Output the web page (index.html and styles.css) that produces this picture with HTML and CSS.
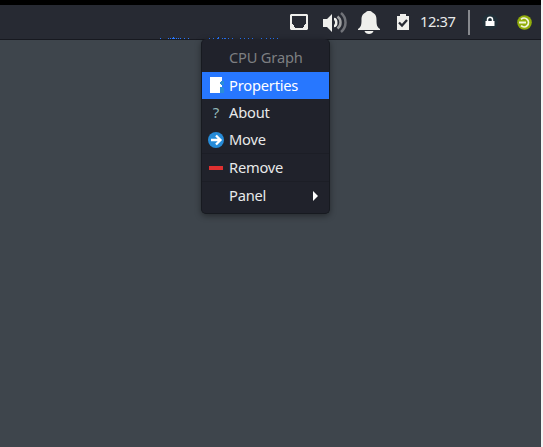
FILE: index.html
```html
<!DOCTYPE html>
<html lang="en">
<head>
<meta charset="utf-8">
<title>Desktop</title>
<link rel="stylesheet" href="styles.css">
</head>
<body>
<div class="desktop">
  <header class="panel">
    <svg class="cpu-graph" width="120" height="2" viewBox="0 0 120 2" shape-rendering="crispEdges" fill="#2777ff">
      <path d="M0 1h1v1H0zM8 1h1v1H8zM10 1h1v1h-1zM12 1h3v1h-3zM13 0h1v1h-1zM16 1h1v1h-1zM18 1h1v1h-1zM20 1h1v1h-1zM24 1h1v1h-1zM28 1h1v1h-1zM49 1h1v1h-1zM53 1h1v1h-1zM57 1h2v1h-2zM58 0h1v1h-1zM62 1h1v1h-1zM64 1h2v1h-2zM68 1h1v1h-1zM72 1h1v1h-1zM80 1h1v1h-1zM84 1h1v1h-1zM88 1h1v1h-1zM92 1h1v1h-1zM101 1h1v1h-1zM106 1h1v1h-1zM110 1h1v1h-1zM113 1h1v1h-1zM117 1h1v1h-1z"/>
    </svg>
    <svg class="network" width="18" height="16" viewBox="0 0 18 16" fill="#efefec">
      <path fill-rule="evenodd" d="M1 0h16l1 1v14l-1 1H1l-1-1V1zM2 2v8h1v1h1v2h1v1h8v-1h1v-2h1v-1h1V2z"/>
    </svg>
    <svg class="volume" width="25" height="21" viewBox="0 0 25 21" fill="none" stroke-width="2.5">
      <path fill="#efefec" d="M0 7h4l5-5v18l-5-5H0z"/>
      <path stroke="#efefec" d="M11 7c3 0 3 7 0 7"/>
      <path stroke="#a0a1a3" d="M14.5 4.5c4 3 4 9 0 12"/>
      <path stroke="#717379" d="M18 1c6 5 6 14 0 19"/>
    </svg>
    <svg class="bell" width="22" height="23" viewBox="0 0 22 23" fill="#efefec">
      <path d="M11 0c2 0 3 .7 3.500 1.500C18 3 18.500 6 18.500 9c0 5 .5 7 3.500 9v1H0v-1c3-2 3.500-4 3.500-9 0-3 .5-6 4-7.500C8 .7 9 0 11 0zM6.500 20h9c-1 4-8 4-9 0z"/>
    </svg>
    <svg class="battery" width="12" height="16" viewBox="0 0 12 16">
      <path fill="#efefec" d="M0 2h3V0h6v2h3v14H0z"/>
      <path fill="none" stroke="#272a33" stroke-width="2.300" d="M2 8.500l3 3 5-5.500"/>
    </svg>
    <time class="clock">12:37</time>
    <span class="divider"></span>
    <svg class="lock" width="16" height="16" viewBox="0 0 16 16">
      <circle cx="8" cy="8" r="8" fill="#213039"/>
      <path fill="none" stroke="#fff" stroke-width="1.500" d="M5.500 8V5.500c0-3 5-3 5 0V8"/>
      <path fill="#fff" d="M3.500 7h9v5h-9z"/>
    </svg>
    <svg class="logout" width="15" height="15" viewBox="0 0 15 15">
      <circle cx="7.500" cy="7.500" r="7.300" fill="#92ad0b"/>
      <path fill="none" stroke="#f3f5dc" stroke-width="1.800" d="M4 4.300a4.400 4.400 0 1 1 0 6.400M2 7.500h7"/>
    </svg>
  </header>

  <nav class="menu">
    <div class="item title"><span class="icon"></span><span class="label">CPU Graph</span></div>
    <div class="item selected"><span class="icon">
      <svg width="16" height="16" viewBox="0 0 16 16" shape-rendering="crispEdges"><path fill="#fff" d="M2 0h12v16H2z"/><path fill="#2b8ed8" d="M12 5h1V4h3v4h-3V7h-1zM12 10h3v1h1v5h-4z"/></svg>
    </span><span class="label">Properties</span></div>
    <div class="item"><span class="icon question">?</span><span class="label">About</span></div>
    <div class="item"><span class="icon">
      <svg width="16" height="16" viewBox="0 0 16 16"><circle cx="8" cy="8" r="8" fill="#268bd8"/><path fill="none" stroke="#fff" stroke-width="2.300" d="M3 8h9M8 3.500L12.500 8 8 12.500"/></svg>
    </span><span class="label">Move</span></div>
    <hr class="separator">
    <div class="item"><span class="icon"><span class="minus"></span></span><span class="label">Remove</span></div>
    <hr class="separator">
    <div class="item"><span class="icon"></span><span class="label">Panel</span>
      <svg class="arrow" width="5" height="10" viewBox="0 0 5 10"><path fill="#fff" d="M0 0l5 5-5 5z"/></svg>
    </div>
  </nav>
</div>
</body>
</html>
```
FILE: styles.css
```css
* {
  box-sizing: border-box;
}

body {
  margin: 0;
  background: #f4f4f4;
  font: 14.67px/20px "Noto Sans", sans-serif;
  color: #e8e9ea;
  overflow: hidden;
}

.desktop {
  position: relative;
  width: 541px;
  height: 447px;
  background: #3e454c;
}

.panel {
  display: flex;
  align-items: center;
  position: relative;
  height: 40px;
  padding-left: 290px;
  border-top: 5px solid #000;
  border-bottom: 1px solid #171920;
  background: #272a33;
}

.panel svg {
  flex: none;
}

.panel .cpu-graph {
  position: absolute;
  left: 160px;
  bottom: 0;
}

.volume {
  margin-left: 15px;
}

.bell {
  margin-left: 10px;
}

.battery {
  margin-left: 17px;
}

.clock {
  width: 36px;
  margin-left: 11px;
  padding-bottom: 2px;
  letter-spacing: -0.4px;
}

.divider {
  width: 2px;
  height: 25px;
  margin-left: 12px;
  background: #87898e;
}

.lock {
  margin-left: 12px;
}

.logout {
  margin-left: 19px;
}

.menu {
  position: absolute;
  left: 201px;
  top: 39px;
  width: 129px;
  height: 175px;
  padding-top: 5px;
  border: 1px solid #171a20;
  border-top: 0;
  border-radius: 5px;
  background: #20222b;
  box-shadow: 0 2px 6px rgba(0, 0, 0, 0.4);
}

.item {
  display: flex;
  align-items: center;
  height: 27px;
  padding: 0 11px 0 6px;
}

.label {
  padding-bottom: 2px;
  letter-spacing: -0.2px;
}

.title {
  height: 28px;
  color: #7d7f82;
}

.selected {
  background: #2777ff;
  color: #fff;
}

.icon {
  display: flex;
  align-items: center;
  justify-content: center;
  width: 16px;
  height: 16px;
  margin-right: 5px;
}

.selected .icon {
  padding-bottom: 1px;
}

.icon svg {
  flex: none;
}

.question {
  padding-bottom: 2px;
  color: #91b7b9;
  font-size: 15px;
}

.minus {
  width: 14px;
  height: 4px;
  background: #df3030;
}

.separator {
  height: 1px;
  margin: 0;
  border: 0;
  background: #1c1e26;
}

.arrow {
  margin-left: auto;
}
```
